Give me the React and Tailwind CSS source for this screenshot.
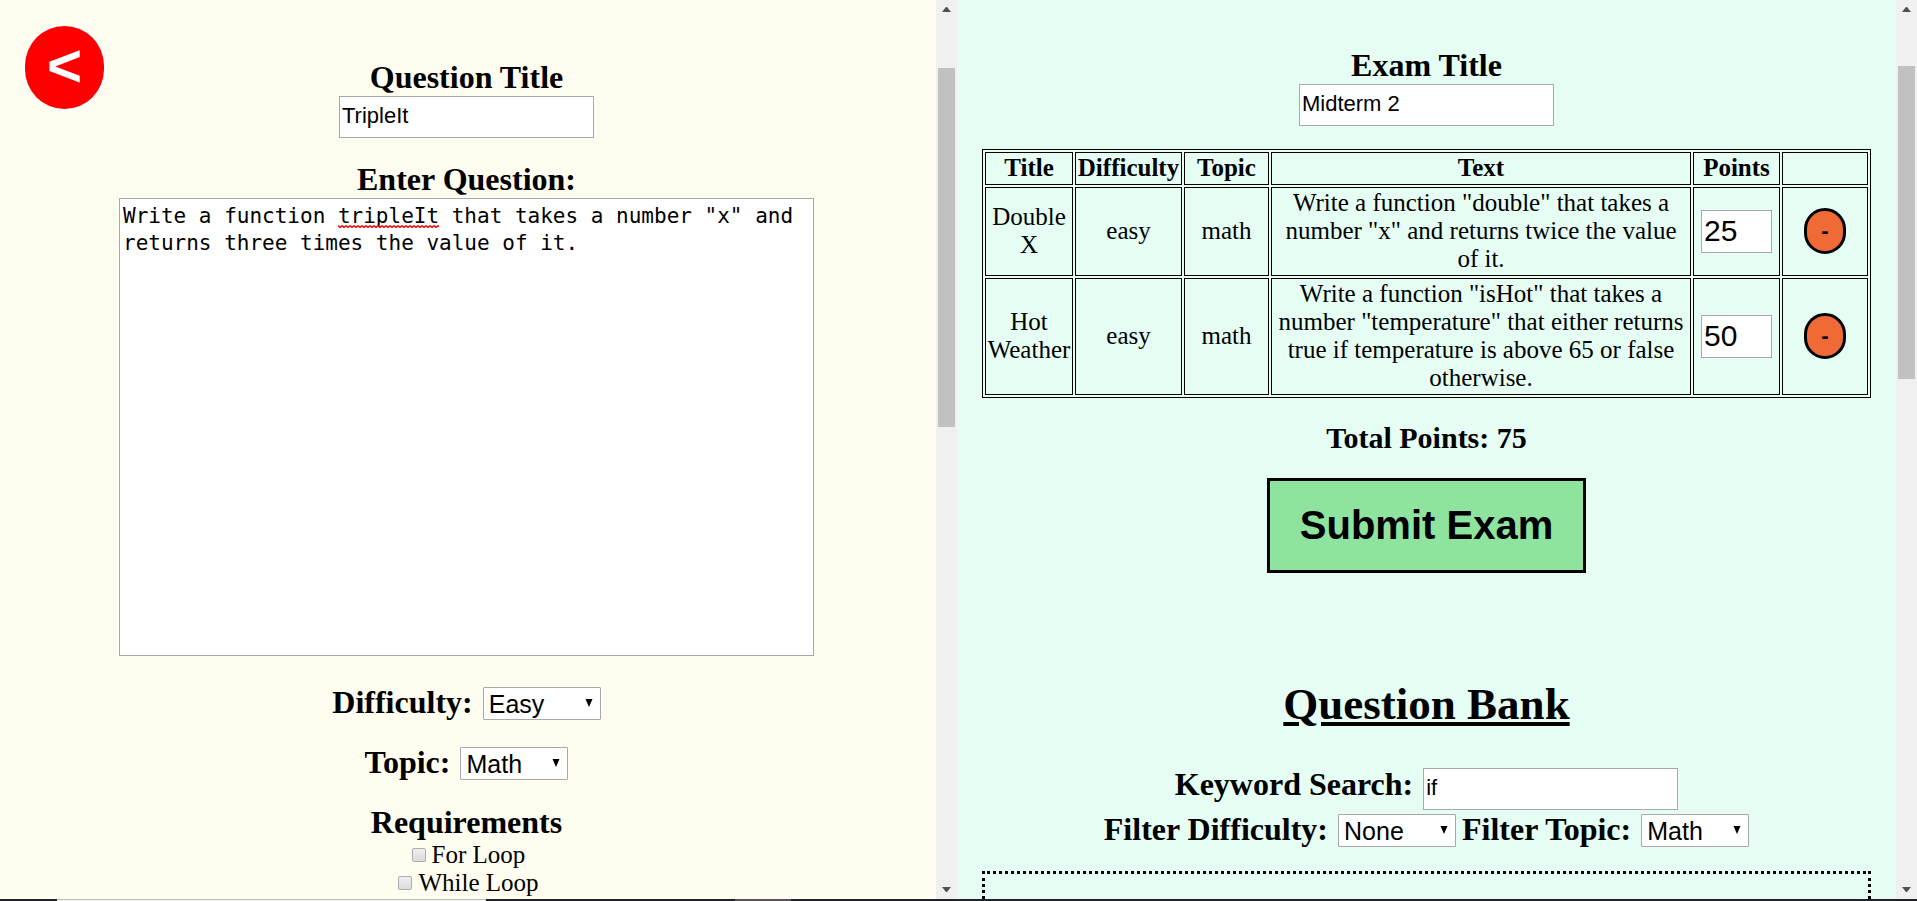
const SERIF = "font-['Liberation_Serif',serif]";

function Arrow({ down, className }) {
  return (
    <svg viewBox="0 0 9 5" className={className} aria-hidden="true">
      <path d={down ? "M0 0H9L5 5H4Z" : "M0 5H9L5 0H4Z"} fill="#505050" />
    </svg>
  );
}

function ScrollTrack({ thumb }) {
  return (
    <div className="flex w-[21px] shrink-0 flex-col items-center justify-between bg-[#f0f0f0] py-[7px]">
      <Arrow className="h-[5px] w-[9px]" />
      <div className={thumb} />
      <Arrow down className="h-[5px] w-[9px]" />
    </div>
  );
}

function TextField({ id, value }) {
  return (
    <input
      id={id}
      type="text"
      defaultValue={value}
      className="h-[42px] w-[255px] border border-[#a9a9a9] bg-white px-[2px] pb-0.5 font-['Liberation_Sans',sans-serif] text-[22px] outline-none"
    />
  );
}

function Dropdown({ id, value, options, width }) {
  return (
    <span className="relative inline-flex items-baseline">
      <select
        id={id}
        defaultValue={value}
        className={`${width} h-[33px] appearance-none rounded-[1px] border border-[#a9a9a9] bg-white pt-0.5 pl-[5px] font-['Liberation_Sans',sans-serif] text-[25px] leading-[29px] outline-none`}
      >
        {options.map((o) => (
          <option key={o}>{o}</option>
        ))}
      </select>
      <svg viewBox="0 0 8 8" className="pointer-events-none absolute top-[12px] right-2 size-2" aria-hidden="true">
        <path d="M0.500 0H7.500L4 8Z" fill="#000" />
      </svg>
    </span>
  );
}

const LABEL = "pb-0.5 text-[32px] leading-[34px] font-bold";
const FIELD_ROW = "flex items-baseline gap-[10px]";
const CELL = "border border-black pb-0.5";

const questions = [
  {
    title: "Double X",
    text: 'Write a function "double" that takes a number "x" and returns twice the value of it.',
    points: 25,
    height: "h-[89px]",
  },
  {
    title: "Hot Weather",
    text: 'Write a function "isHot" that takes a number "temperature" that either returns true if temperature is above 65 or false otherwise.',
    points: 50,
    height: "h-[117px]",
  },
];

function QuestionForm() {
  return (
    <section className="relative flex min-w-0 flex-1 flex-col items-center overflow-hidden bg-[#fffdf0] pt-[60px] pr-[3px]">
      <button
        type="button"
        aria-label="Back"
        className="absolute top-[26px] left-[25px] flex h-[83px] w-[79px] items-center justify-center rounded-[40px] bg-[#ff0000] pb-1 font-['Liberation_Sans',sans-serif] text-[60px] leading-none font-bold text-white ring-2 ring-white"
      >
        &lt;
      </button>
      <label htmlFor="question-title" className={LABEL}>Question Title</label>
      <TextField id="question-title" value="TripleIt" />
      <label htmlFor="question-text" className={`${LABEL} mt-6`}>Enter Question:</label>
      <div className="relative w-[695px] max-w-full font-['DejaVu_Sans_Mono',monospace] text-[21px] leading-[27px]">
        <textarea
          id="question-text"
          spellCheck={false}
          defaultValue={'Write a function tripleIt that takes a number "x" and returns three times the value of it.'}
          className="block h-[458px] w-full resize-none border border-[#a9a9a9] bg-white px-[3px] py-1 outline-none"
        />
        <svg className="pointer-events-none absolute top-[27px] left-[calc(4px+17ch)] h-[3px] w-[8ch]" aria-hidden="true">
          <defs>
            <pattern id="squiggle" width="4" height="3" patternUnits="userSpaceOnUse">
              <path d="M0 0.500L2 2.500L4 0.500" fill="none" stroke="#f00" strokeWidth="1.4" />
            </pattern>
          </defs>
          <rect width="100%" height="3" fill="url(#squiggle)" />
        </svg>
      </div>
      <div className={`${FIELD_ROW} mt-[29px]`}>
        <label htmlFor="difficulty" className={LABEL}>Difficulty:</label>
        <Dropdown id="difficulty" value="Easy" options={["Easy", "Medium", "Hard"]} width="w-[118px]" />
      </div>
      <div className={`${FIELD_ROW} mt-6`}>
        <label htmlFor="topic" className={LABEL}>Topic:</label>
        <Dropdown id="topic" value="Math" options={["Math", "Loops"]} width="w-[108px]" />
      </div>
      <fieldset className="mt-6 flex flex-col items-center">
        <legend className={`${LABEL} mx-auto`}>Requirements</legend>
        {["For Loop", "While Loop"].map((name) => (
          <label key={name} className="flex items-center gap-[6px] pl-1 text-[25px] leading-7">
            <input
              type="checkbox"
              className="size-[14px] appearance-none rounded-[2px] border border-[#acacac] bg-linear-to-b from-[#efefef] to-[#dcdcdc]"
            />
            {name}
          </label>
        ))}
      </fieldset>
    </section>
  );
}

function ExamPanel() {
  return (
    <section className="flex min-w-0 flex-1 flex-col items-center overflow-hidden bg-[#e5fdf3] px-[25px] pt-12">
      <label htmlFor="exam-title" className={LABEL}>Exam Title</label>
      <TextField id="exam-title" value="Midterm 2" />
      <table className="mt-[23px] w-full table-fixed border-separate border-spacing-[2px] border border-black text-center text-[25px] leading-7">
        <colgroup>
          <col className="w-[88px]" />
          <col className="w-[107px]" />
          <col className="w-[85px]" />
          <col />
          <col className="w-[87px]" />
          <col className="w-[86px]" />
        </colgroup>
        <thead>
          <tr className="h-[33px]">
            {["Title", "Difficulty", "Topic", "Text", "Points", ""].map((h) => (
              <th key={h} className={CELL}>{h}</th>
            ))}
          </tr>
        </thead>
        <tbody>
          {questions.map((q) => (
            <tr key={q.title} className={q.height}>
              <td className={CELL}>{q.title}</td>
              <td className={CELL}>easy</td>
              <td className={CELL}>math</td>
              <td className={CELL}>{q.text}</td>
              <td className="border border-black">
                <input
                  type="text"
                  defaultValue={q.points}
                  aria-label={`Points for ${q.title}`}
                  className="mx-auto block h-[43px] w-[71px] border border-[#a9a9a9] bg-white px-[2px] pb-0.5 font-['Liberation_Sans',sans-serif] text-[30px] outline-none"
                />
              </td>
              <td className={CELL}>
                <button
                  type="button"
                  aria-label={`Remove ${q.title}`}
                  className="mx-auto flex h-[46px] w-[42px] items-center justify-center rounded-[21px] border-3 border-black bg-[#f06a35] font-['Liberation_Sans',sans-serif] text-[22px] font-bold"
                >
                  -
                </button>
              </td>
            </tr>
          ))}
        </tbody>
      </table>
      <p className="mt-6 text-[30px] leading-8 font-bold">Total Points: 75</p>
      <button
        type="button"
        className="mt-6 h-[95px] border-3 border-black bg-[#8ee49f] px-[30px] pb-0.5 font-['Liberation_Sans',sans-serif] text-[40px] font-bold"
      >
        Submit Exam
      </button>
      <h2 className="mt-[105px] text-[45px] leading-[52px] font-bold underline">Question Bank</h2>
      <div className={`${FIELD_ROW} mt-[37px]`}>
        <label htmlFor="keyword" className={LABEL}>Keyword Search:</label>
        <TextField id="keyword" value="if" />
      </div>
      <div className="mt-0.5 flex items-baseline gap-[6px]">
        <div className={FIELD_ROW}>
          <label htmlFor="filter-difficulty" className={LABEL}>Filter Difficulty:</label>
          <Dropdown id="filter-difficulty" value="None" options={["None", "Easy", "Hard"]} width="w-[118px]" />
        </div>
        <div className={FIELD_ROW}>
          <label htmlFor="filter-topic" className={LABEL}>Filter Topic:</label>
          <Dropdown id="filter-topic" value="Math" options={["None", "Math"]} width="w-[108px]" />
        </div>
      </div>
      <div className="mt-[23px] w-full flex-1 border-x-3 border-t-3 border-dotted border-black" />
    </section>
  );
}

export default function App() {
  return (
    <div className={`flex h-screen flex-col overflow-hidden text-black ${SERIF}`}>
      <main className="grid min-h-0 flex-1 grid-cols-[957fr_960fr] grid-rows-1">
        <div className="flex min-h-0 min-w-0">
          <QuestionForm />
          <ScrollTrack thumb="mt-14 mb-auto h-[359px] w-[17px] bg-[#c1c1c1]" />
        </div>
        <div className="flex min-h-0 min-w-0">
          <ExamPanel />
          <ScrollTrack thumb="mt-[54px] mb-auto h-[313px] w-[17px] bg-[#c1c1c1]" />
        </div>
      </main>
      <footer className="flex h-[2px] bg-[#22222c]">
        <div className="ml-[57px] w-[429px] border-t border-[#b9bfb9] bg-[#eef0ee]" />
        <div className="ml-[249px] w-[56px] bg-[#5a525a]" />
      </footer>
    </div>
  );
}
